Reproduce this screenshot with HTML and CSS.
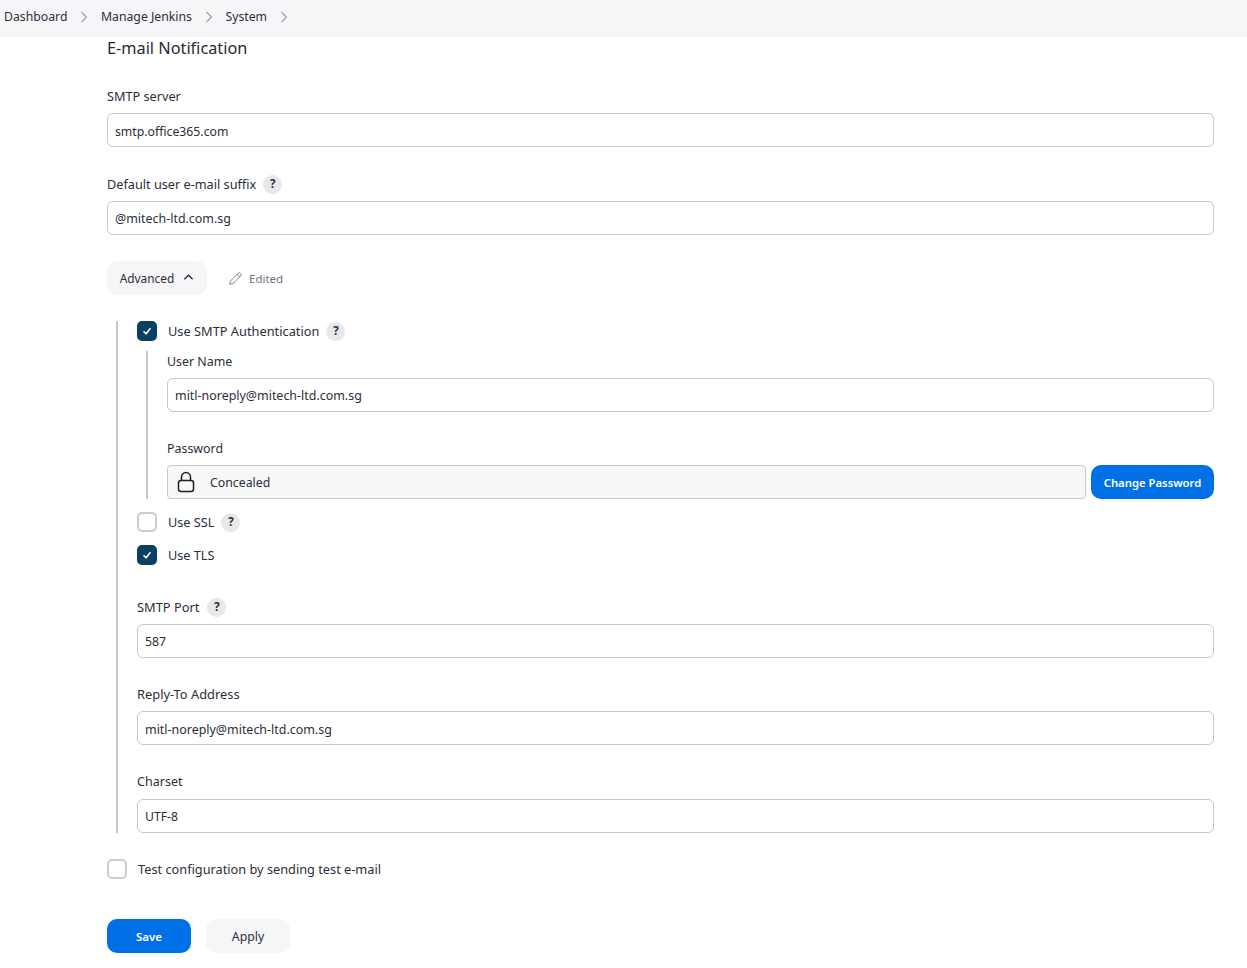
FILE: index.html
```html
<!DOCTYPE html>
<html lang="en">
<head>
<meta charset="utf-8">
<title>System - Jenkins</title>
<link rel="stylesheet" href="styles.css">
</head>
<body>
<nav class="breadcrumbs">
  <a class="crumb">Dashboard</a>
  <svg class="chev" viewBox="0 0 8 12"><path d="M1.5 1l5 5-5 5"/></svg>
  <a class="crumb">Manage Jenkins</a>
  <svg class="chev" viewBox="0 0 8 12"><path d="M1.5 1l5 5-5 5"/></svg>
  <a class="crumb">System</a>
  <svg class="chev" viewBox="0 0 8 12"><path d="M1.5 1l5 5-5 5"/></svg>
</nav>
<main class="main">
  <h2 class="title">E-mail Notification</h2>

  <div class="field first">
    <div class="label">SMTP server</div>
    <input class="input" value="smtp.office365.com">
  </div>
  <div class="field">
    <div class="label">Default user e-mail suffix <span class="help">?</span></div>
    <input class="input wide" value="@mitech-ltd.com.sg">
  </div>

  <div class="adv-row">
    <button class="btn btn-light adv">Advanced
      <svg class="caret" viewBox="0 0 12 8"><path d="M1.5 6.5L6 2l4.5 4.5"/></svg>
    </button>
    <span class="edited">
      <svg class="pencil" viewBox="0 0 16 16"><path d="M1.8 14.2l.9-3.6L10.9 2.3a1.4 1.4 0 0 1 2 0l.8.8a1.4 1.4 0 0 1 0 2l-8.300 8.200z M9.700 3.500l2.800 2.800"/></svg>
      Edited
    </span>
  </div>

  <section class="rail outer">
    <label class="check"><span class="box on"><svg viewBox="0 0 12 12"><path d="M2.500 6.300l2.500 2.500 4.500-5.500"/></svg></span>Use SMTP Authentication <span class="help">?</span></label>
    <div class="rail inner">
      <div class="label">User Name</div>
      <input class="input wide" value="mitl-noreply@mitech-ltd.com.sg">
      <div class="label pw-label">Password</div>
      <div class="pw-row">
        <div class="concealed">
          <svg class="lock" viewBox="0 0 18 22"><rect x="1.500" y="9.500" width="15" height="11" rx="2.500"/><path d="M4.500 9.500V6a4.500 4.500 0 0 1 9 0v3.500"/></svg>
          <span>Concealed</span>
        </div>
        <button class="btn btn-blue change">Change Password</button>
      </div>
    </div>
    <label class="check ssl"><span class="box"></span>Use SSL <span class="help">?</span></label>
    <label class="check tls"><span class="box on"><svg viewBox="0 0 12 12"><path d="M2.500 6.300l2.500 2.500 4.500-5.500"/></svg></span>Use TLS</label>
    <div class="field port">
      <div class="label">SMTP Port <span class="help">?</span></div>
      <input class="input" value="587">
    </div>
    <div class="field reply">
      <div class="label">Reply-To Address</div>
      <input class="input wide" value="mitl-noreply@mitech-ltd.com.sg">
    </div>
    <div class="field charset">
      <div class="label">Charset</div>
      <input class="input" value="UTF-8">
    </div>
  </section>

  <label class="check test"><span class="box"></span>Test configuration by sending test e-mail</label>

  <div class="actions">
    <button class="btn btn-blue save">Save</button>
    <button class="btn btn-light apply">Apply</button>
  </div>
</main>
</body>
</html>
```
FILE: styles.css
```css
* { box-sizing: border-box; }
html, body { margin: 0; padding: 0; background: #fff; }
body {
  font-family: "Noto Sans", "Open Sans", sans-serif;
  font-size: 12.700px;
  line-height: 20px;
  color: #2b2e3b;
  height: 968px;
  overflow: hidden;
}
.breadcrumbs {
  height: 37px;
  background: #f6f6f8;
  display: flex;
  align-items: center;
  padding: 0 0 3px 4px;
  font-size: 12.250px;
}
.crumb { color: #2b2e3b; }
.chev { width: 8px; height: 12px; margin: 0 12.500px 0 13px; fill: none; stroke: #9a9ca6; stroke-width: 1.100; }
.main { padding: 0 33px 0 107px; }
.title { margin: 0; font-size: 16.300px; font-weight: 400; line-height: 22px; height: 22px; color: #262a35; }
.field { margin-top: 27px; }
.label { height: 20px; margin-bottom: 7px; display: flex; align-items: center; gap: 7px; color: #2b2e3b; }
.help {
  width: 19px; height: 19px; border-radius: 50%;
  background: #e8e8e8; color: #2b2e3b;
  display: inline-flex; align-items: center; justify-content: center;
  font-size: 11.500px; font-weight: 700; flex: none;
}
.input {
  display: block; width: 100%; height: 34px;
  border: 1px solid #bfcbd1; border-radius: 6px;
  padding: 0 7px; background: #fff;
  font: inherit; font-size: 12.250px; color: #2b2e3b; outline: none;
}
.input.wide { font-size: 12.450px; }
.first .input, .reply .input { padding-top: 2px; }
.adv-row { display: flex; align-items: center; gap: 21px; margin-top: 26px; }
.btn { border: 0; height: 34px; font: inherit; border-radius: 10px; display: inline-flex; align-items: center; justify-content: center; padding: 1px 0 0; }
.btn-light { background: #f6f6f8; color: #2b2e3b; }
.btn-blue { background: #0070e6; color: #fff; font-weight: 600; }
.adv { width: 100px; gap: 9px; font-size: 11.850px; padding-top: 0; }
.caret { width: 11px; height: 8px; fill: none; stroke: #2b2e3b; stroke-width: 1.500; margin-top: -3px; }
.edited { display: inline-flex; align-items: center; gap: 6px; color: #6f7287; font-size: 11.500px; padding-top: 1px; }
.pencil { width: 15px; height: 15px; fill: none; stroke: #7b7e91; stroke-width: 1; }
.rail { border-left: 2px solid #bfcbd1; padding-left: 19px; }
.outer { margin: 26px 0 0 9px; height: 512px; }
.outer .field { margin-top: 26px; }
.inner { margin: 10px 0 0 9px; height: 148px; font-size: 12.400px; }
.inner .label { padding-top: 2px; }
.check { display: flex; align-items: center; gap: 11px; height: 20px; font-size: 12.800px; }
.check .help { margin-left: -4px; }
.box {
  width: 20px; height: 20px; border-radius: 5px;
  border: 2px solid #c4ced4; background: #fff; flex: none;
  display: flex; align-items: center; justify-content: center;
}
.box.on { background: #0b3e63; border-color: #0b3e63; }
.box svg { width: 12px; height: 12px; fill: none; stroke: #fff; stroke-width: 1.500; }
.pw-label { margin-top: 26px; }
.pw-row { display: flex; gap: 5px; }
.concealed {
  flex: 1; height: 34px; background: #f8f8f9;
  border: 1px solid #bfcbd1; border-radius: 4px;
  display: flex; align-items: center; padding-left: 9px; gap: 15px;
  font-size: 12.300px;
}
.concealed span { padding-top: 1px; }
.lock { width: 18px; height: 22px; fill: none; stroke: #1d1f28; stroke-width: 1.500; }
.change { width: 123px; font-size: 11.300px; }
.ssl, .tls { margin-top: 13px; font-size: 12.700px; }
.outer .field.port { margin-top: 32px; }
.port .label { gap: 8px; }
.port .label, .reply .label { font-size: 12.850px; }
.field.charset .label { margin-bottom: 8px; padding-top: 2px; font-size: 12.550px; }
.test { margin-top: 26px; font-size: 12.750px; }
.actions { display: flex; gap: 15px; margin-top: 40px; }
.save { width: 84px; font-size: 11.500px; }
.apply { width: 84px; font-size: 12.250px; padding-top: 2px; }
```
